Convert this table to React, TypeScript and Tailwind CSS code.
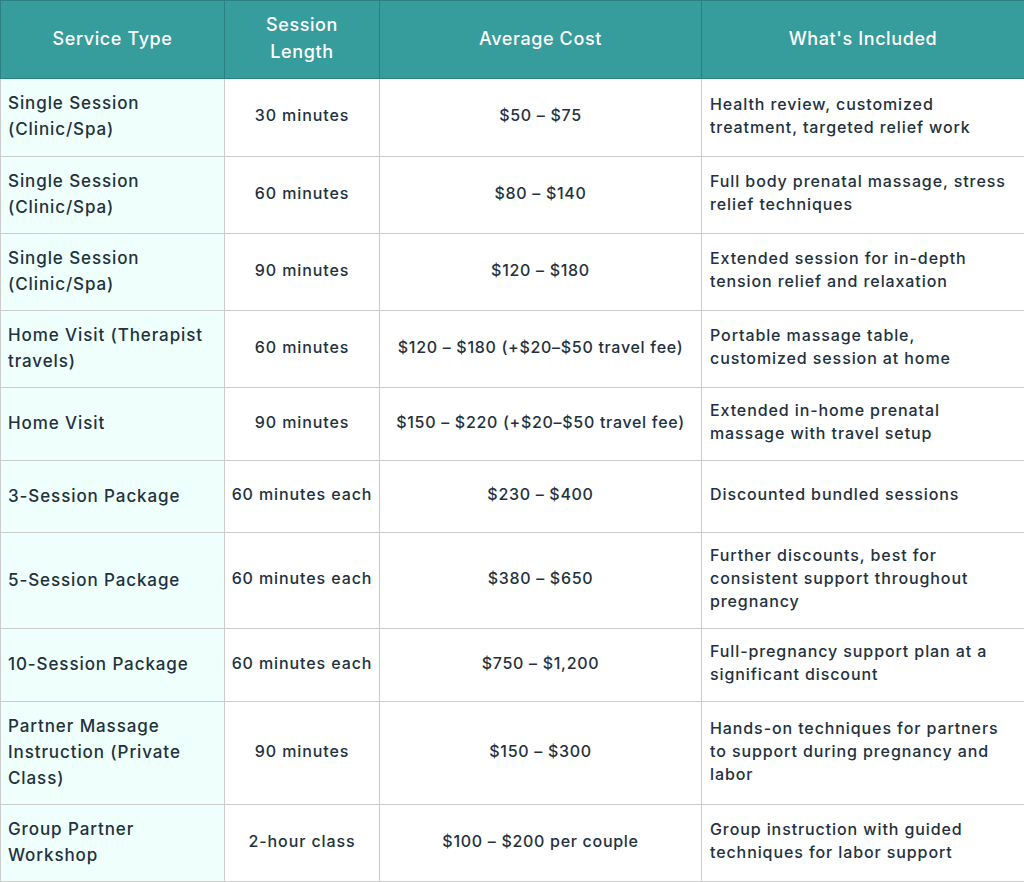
import React from "react";

type Row = { type: string[]; len: string; cost: string; inc: string[] };

const rows: Row[] = [
  { type: ["Single Session", "(Clinic/Spa)"], len: "30 minutes", cost: "$50 – $75", inc: ["Health review, customized", "treatment, targeted relief work"] },
  { type: ["Single Session", "(Clinic/Spa)"], len: "60 minutes", cost: "$80 – $140", inc: ["Full body prenatal massage, stress", "relief techniques"] },
  { type: ["Single Session", "(Clinic/Spa)"], len: "90 minutes", cost: "$120 – $180", inc: ["Extended session for in-depth", "tension relief and relaxation"] },
  { type: ["Home Visit (Therapist", "travels)"], len: "60 minutes", cost: "$120 – $180 (+$20–$50 travel fee)", inc: ["Portable massage table,", "customized session at home"] },
  { type: ["Home Visit"], len: "90 minutes", cost: "$150 – $220 (+$20–$50 travel fee)", inc: ["Extended in-home prenatal", "massage with travel setup"] },
  { type: ["3-Session Package"], len: "60 minutes each", cost: "$230 – $400", inc: ["Discounted bundled sessions"] },
  { type: ["5-Session Package"], len: "60 minutes each", cost: "$380 – $650", inc: ["Further discounts, best for", "consistent support throughout", "pregnancy"] },
  { type: ["10-Session Package"], len: "60 minutes each", cost: "$750 – $1,200", inc: ["Full-pregnancy support plan at a", "significant discount"] },
  { type: ["Partner Massage", "Instruction (Private", "Class)"], len: "90 minutes", cost: "$150 – $300", inc: ["Hands-on techniques for partners", "to support during pregnancy and", "labor"] },
  { type: ["Group Partner", "Workshop"], len: "2-hour class", cost: "$100 – $200 per couple", inc: ["Group instruction with guided", "techniques for labor support"] },
];

const Lines = ({ lines }: { lines: string[] }) => (
  <>
    {lines.map((l, i) => (
      <span key={i} className="block whitespace-nowrap">
        {l}
      </span>
    ))}
  </>
);

export default function App() {
  return (
    <div className="w-[1024px] bg-white" style={{ fontFamily: 'Inter, "Liberation Sans", sans-serif' }}>
      <table className="w-[1024px] table-fixed border-collapse text-[#22313d]">
        <colgroup>
          <col className="w-[224px]" />
          <col className="w-[155px]" />
          <col className="w-[322px]" />
          <col className="w-[323px]" />
        </colgroup>
        <thead>
          <tr className="bg-[#379c9c]">
            <th className="border border-[#2c8080] px-2 pt-[10px] pb-[13px] text-center text-[18px] font-medium leading-[27px] tracking-[0.6px] text-white">Service Type</th>
            <th className="border border-[#2c8080] px-2 pt-[10px] pb-[13px] text-center text-[18px] font-medium leading-[27px] tracking-[0.6px] text-white">
              Session
              <br />
              Length
            </th>
            <th className="border border-[#2c8080] px-2 pt-[10px] pb-[13px] text-center text-[18px] font-medium leading-[27px] tracking-[0.6px] text-white">Average Cost</th>
            <th className="border border-[#2c8080] px-2 pt-[10px] pb-[13px] text-center text-[18px] font-medium leading-[27px] tracking-[0.6px] text-white">What's Included</th>
          </tr>
        </thead>
        <tbody>
          {rows.map((r, i) => (
            <tr key={i}>
              <td
                className={
                  i === 0
                    ? "h-[72px] border border-[#cccccc] bg-[#effffb] pt-[11px] pb-[14px] pl-[7px] pr-1 text-left align-middle text-[17px] font-medium leading-[26px] tracking-[0.9px]"
                    : "h-[72px] border border-[#cccccc] bg-[#effffb] pt-[11px] pb-[13px] pl-[7px] pr-1 text-left align-middle text-[17px] font-medium leading-[26px] tracking-[0.9px]"
                }
              >
                <Lines lines={r.type} />
              </td>
              <td className="border border-[#cccccc] px-1 pt-[11px] pb-[15px] text-center align-middle text-[16px] font-medium leading-[23px] tracking-[0.9px] whitespace-nowrap">{r.len}</td>
              <td className="border border-[#cccccc] px-1 pt-[11px] pb-[15px] text-center align-middle text-[16px] font-medium leading-[23px] tracking-[0.7px] whitespace-nowrap">{r.cost}</td>
              <td className="border border-[#cccccc] pt-[11px] pb-[15px] pl-[8px] pr-1 text-left align-middle text-[16px] font-medium leading-[23px] tracking-[0.9px]">
                <Lines lines={r.inc} />
              </td>
            </tr>
          ))}
        </tbody>
      </table>
    </div>
  );
}
